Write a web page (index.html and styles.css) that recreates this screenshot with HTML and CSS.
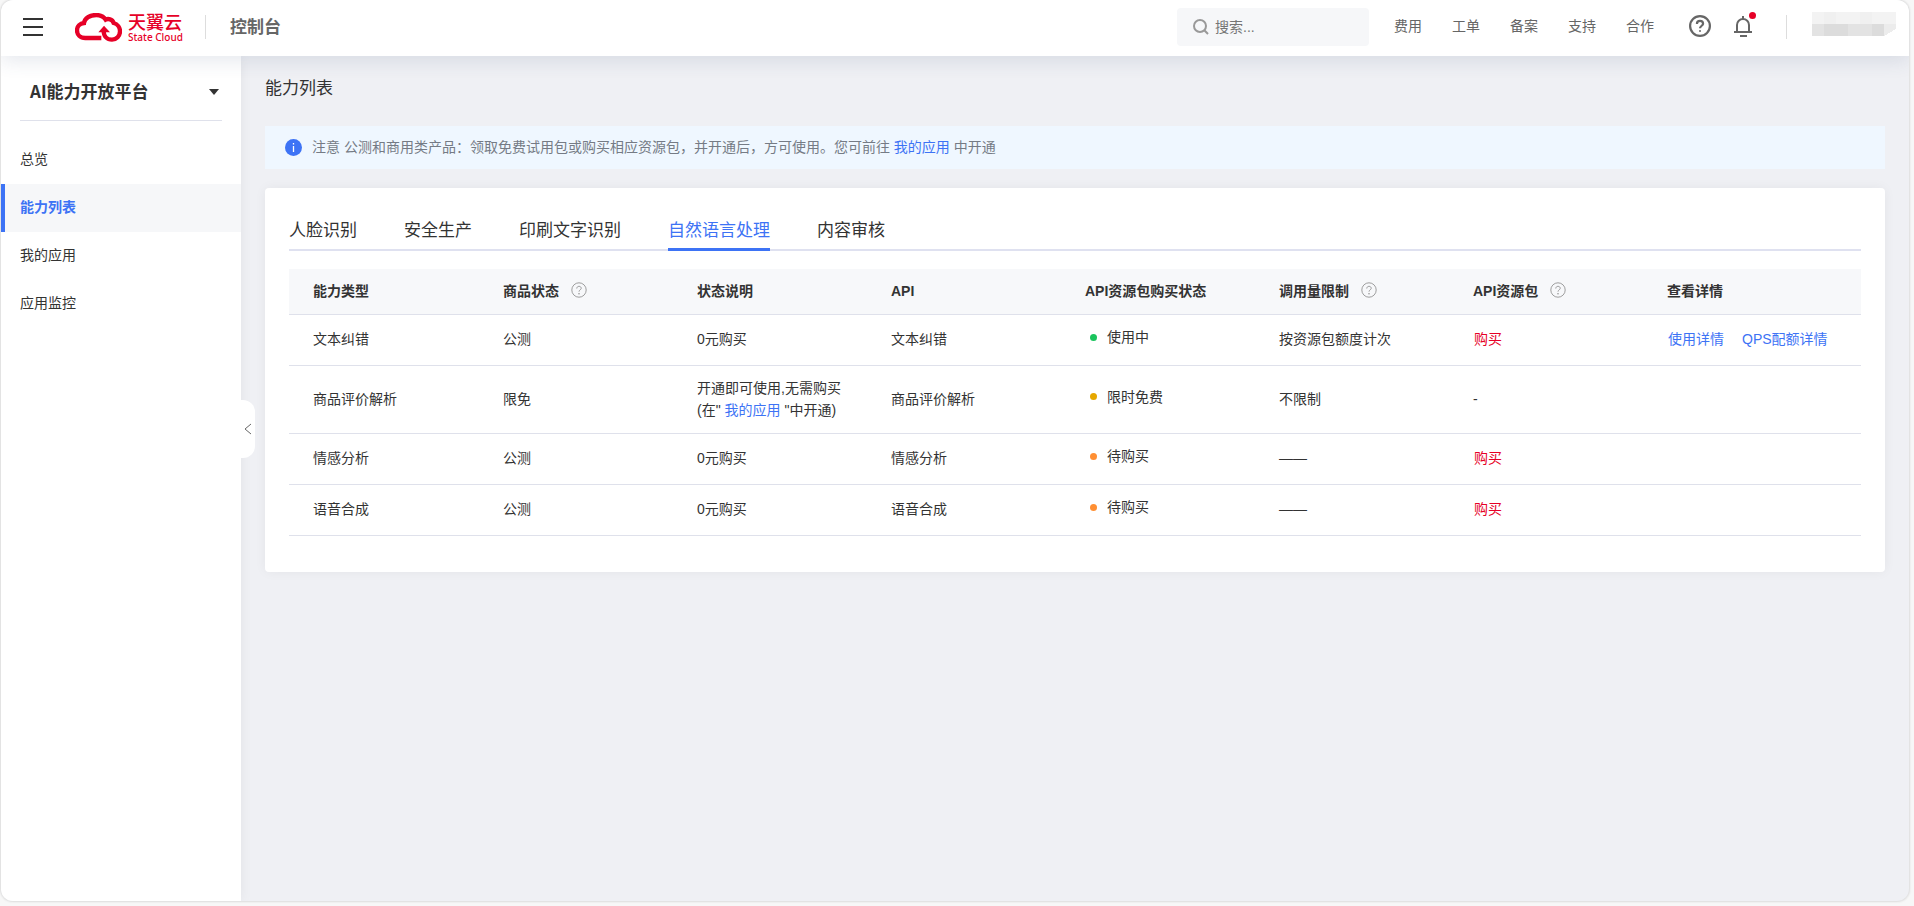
FILE: index.html
```html
<!doctype html>
<html lang="zh-CN">
<head>
	<meta charset="UTF-8">
	<meta name="viewport" content="width=device-width, initial-scale=1">
	<title>控制台 - 能力列表</title>
	<link rel="stylesheet" href="styles.css">
</head>
<body>
	<svg class="defs" width="0" height="0">
		<symbol id="help" viewBox="0 0 20 20">
			<circle cx="10" cy="10" r="9" fill="none" stroke="currentColor"/>
			<path d="M7.2 8.2c0-1.7 1.2-2.8 2.8-2.8s2.8 1 2.8 2.5c0 1.8-2.8 2-2.8 4.2" fill="none" stroke="currentColor"/>
			<circle cx="10" cy="14.6" r=".9" fill="currentColor" stroke="none"/>
		</symbol>
	</svg>
	<div class="frame">
		<header class="header">
			<button type="button" class="menu-btn" aria-label="菜单"><span></span><span></span><span></span></button>
			<a href="#" class="logo">
				<svg width="47" height="29" viewBox="225 37 141 87">
					<path d="M304 112H256C240 112 231 101 231 89C231 77 240 68 252 67C254 52 270 43 289 43C303 43 312 49 317 57C324 53 337 55 341 67C353 70 360 81 360 92C360 106 349 117 336 117C321 117 311 107 311 90" fill="none" stroke="#e60027" stroke-width="13"/>
					<path d="M295 95L312 75L330 95z" fill="#e60027"/>
				</svg>
				<span class="logo-text"><b>天翼云</b><i>State Cloud</i></span>
			</a>
			<a href="#" class="console">控制台</a>
			<label class="search">
				<svg width="16" height="16" viewBox="0 0 16 16" fill="none" stroke="#999" stroke-width="2"><circle cx="7" cy="7" r="6"/><path d="M11.3 11.3L15 15"/></svg>
				<input type="text" placeholder="搜索..." aria-label="搜索">
			</label>
			<nav class="top-nav">
				<a href="#">费用</a>
				<a href="#">工单</a>
				<a href="#">备案</a>
				<a href="#">支持</a>
				<a href="#">合作</a>
			</nav>
			<button type="button" class="icon-btn help-btn" aria-label="帮助"><svg width="22" height="22"><use href="#help"/></svg></button>
			<button type="button" class="icon-btn bell-btn" aria-label="消息">
				<svg width="18" height="22" viewBox="0 0 18 22" fill="none" stroke="#666" stroke-width="2"><path d="M3 17V10a6 6 0 0 1 12 0v7M0 17h18M6 21h7M9 1v3"/></svg>
				<span class="badge"></span>
			</button>
			<div class="user">
				<svg width="84" height="24" viewBox="0 0 84 24" shape-rendering="crispEdges">
					<path fill="#f3f3f3" d="M0 0h84v12H0z"/>
					<path fill="#f0f0f0" d="M12 0h12v12H12zM48 0h12v12H48z"/>
					<path fill="#dcdcdc" d="M12 12h24v12H12zM60 12h12v12H60z"/>
					<path fill="#e3e3e3" d="M0 12h12v12H0zM36 12h24v12H36z"/>
					<path fill="#ececec" d="M72 12h12v5l-12 7z"/>
				</svg>
			</div>
		</header>
		<div class="body">
			<aside class="side">
				<button type="button" class="side-title">AI能力开放平台<span class="caret"></span></button>
				<ul>
					<li><a href="#">总览</a></li>
					<li><a href="#" class="on">能力列表</a></li>
					<li><a href="#">我的应用</a></li>
					<li><a href="#">应用监控</a></li>
				</ul>
				<button type="button" class="fold" aria-label="收起"><svg width="8" height="12" viewBox="0 0 8 12"><path d="M7 1L1 6l6 5" fill="none" stroke="#666"/></svg></button>
			</aside>
			<main class="main">
				<h1>能力列表</h1>
				<div class="notice">
					<svg width="17" height="17" viewBox="0 0 17 17"><circle cx="8.5" cy="8.5" r="8.5" fill="#3d73f5"/><path d="M8.5 7v6M8.5 4v1.5" stroke="#fff" stroke-width="1.3"/></svg>
					<p>注意 公测和商用类产品：领取免费试用包或购买相应资源包，并开通后，方可使用。您可前往 <a href="#">我的应用</a> 中开通</p>
				</div>
				<section class="card">
					<div class="tabs">
						<button type="button">人脸识别</button>
						<button type="button">安全生产</button>
						<button type="button">印刷文字识别</button>
						<button type="button" class="on">自然语言处理</button>
						<button type="button">内容审核</button>
					</div>
					<table>
						<colgroup>
							<col class="c-first"><col class="c"><col class="c"><col class="c"><col class="c"><col class="c"><col class="c"><col>
						</colgroup>
						<thead>
							<tr>
								<th>能力类型</th>
								<th>商品状态<svg class="tip" width="16" height="16"><use href="#help"/></svg></th>
								<th>状态说明</th>
								<th>API</th>
								<th>API资源包购买状态</th>
								<th>调用量限制<svg class="tip" width="16" height="16"><use href="#help"/></svg></th>
								<th>API资源包<svg class="tip" width="16" height="16"><use href="#help"/></svg></th>
								<th>查看详情</th>
							</tr>
						</thead>
						<tbody>
							<tr>
								<td>文本纠错</td>
								<td>公测</td>
								<td>0元购买</td>
								<td>文本纠错</td>
								<td><span class="status using">使用中</span></td>
								<td>按资源包额度计次</td>
								<td><a href="#" class="buy">购买</a></td>
								<td class="links"><a href="#">使用详情</a><a href="#">QPS配额详情</a></td>
							</tr>
							<tr>
								<td>商品评价解析</td>
								<td>限免</td>
								<td>开通即可使用,无需购买<br>(在" <a href="#">我的应用</a> "中开通)</td>
								<td>商品评价解析</td>
								<td><span class="status free">限时免费</span></td>
								<td>不限制</td>
								<td>-</td>
								<td></td>
							</tr>
							<tr>
								<td>情感分析</td>
								<td>公测</td>
								<td>0元购买</td>
								<td>情感分析</td>
								<td><span class="status wait">待购买</span></td>
								<td>——</td>
								<td><a href="#" class="buy">购买</a></td>
								<td></td>
							</tr>
							<tr>
								<td>语音合成</td>
								<td>公测</td>
								<td>0元购买</td>
								<td>语音合成</td>
								<td><span class="status wait">待购买</span></td>
								<td>——</td>
								<td><a href="#" class="buy">购买</a></td>
								<td></td>
							</tr>
						</tbody>
					</table>
				</section>
			</main>
		</div>
	</div>
</body>
</html>
```
FILE: styles.css
```css
*{
	margin:0;
	padding:0;
	box-sizing:border-box;
}
body{
	min-height:100vh;
	padding:0 5px 5px 1px;
	display:flex;
	background:#f7f7f7;
	color:#333;
	font:14px/22px "Liberation Sans","Noto Sans CJK SC",sans-serif;
}
ul{
	list-style:none;
}
a{
	color:#3d73f5;
	text-decoration:none;
}
button{
	border:0;
	background:none;
	color:inherit;
	font:inherit;
	cursor:pointer;
}
.defs{
	position:absolute;
}
.frame{
	flex:1;
	min-width:0;
	display:flex;
	flex-direction:column;
	border-radius:12px;
	overflow:hidden;
	background:#eff0f4;
	box-shadow:0 0 2px 1px #dcdcdc;
}
/*顶部*/
.header{
	position:relative;
	z-index:2;
	height:56px;
	padding:0 13px 2px 22px;
	display:flex;
	align-items:center;
	background:#fff;
	box-shadow:0 4px 20px rgba(60,80,120,.14);
}
.menu-btn{
	width:20px;
	display:flex;
	flex-direction:column;
	gap:6px;
}
.menu-btn span{
	height:2px;
	background:#333;
}
.logo{
	margin-left:32px;
	display:flex;
	align-items:center;
	gap:6px;
	color:#e60027;
}
.logo-text{
	width:77px;
	display:flex;
	flex-direction:column;
}
.logo-text b{
	font:500 18px/20px "Noto Sans CJK SC",sans-serif;
}
.logo-text i{
	font:500 10px/12px "Noto Sans",sans-serif;
	white-space:nowrap;
}
.console{
	height:24px;
	padding-left:24px;
	border-left:1px solid #ddd;
	color:#666;
	font:bold 17px/22px "Noto Sans CJK SC",sans-serif;
}
.search{
	width:192px;
	height:38px;
	margin-left:auto;
	padding:0 16px;
	display:flex;
	align-items:center;
	gap:6px;
	border-radius:4px;
	background:#f6f7f9;
}
.search svg{
	flex:none;
}
.search input{
	width:100%;
	border:0;
	outline:0;
	background:none;
	font:inherit;
}
.search input::placeholder{
	color:#757575;
}
.top-nav{
	margin:0 35px 2px 25px;
	display:flex;
	gap:30px;
}
.top-nav a{
	color:#666;
}
.icon-btn{
	position:relative;
	display:flex;
	margin-bottom:2px;
	color:#666;
}
.help-btn svg{
	stroke-width:2;
}
.bell-btn{
	margin-left:23px;
	margin-right:34px;
}
.badge{
	position:absolute;
	right:-4px;
	top:-3px;
	width:7px;
	height:7px;
	border-radius:50%;
	background:#e60027;
}
.user{
	height:24px;
	padding-left:25px;
	border-left:1px solid #ddd;
}
.user svg{
	display:block;
	margin-top:-3px;
}
/*左侧菜单*/
.body{
	flex:1;
	display:flex;
}
.side{
	position:relative;
	flex:none;
	width:240px;
	background:#fff;
	box-shadow:0 0 12px rgba(0,0,0,.06);
}
.side-title{
	width:202px;
	height:65px;
	margin-left:19px;
	padding:5px 3px 0 10px;
	display:flex;
	align-items:center;
	justify-content:space-between;
	border-bottom:1px solid #dfe1eb;
	font:bold 17px/24px "Noto Sans CJK SC",sans-serif;
}
.caret{
	margin-top:2px;
	border:5px solid transparent;
	border-top:6px solid #333;
	border-bottom:0;
}
.side ul{
	margin-top:15px;
}
.side li a{
	height:48px;
	padding:0 0 2px 15px;
	display:flex;
	align-items:center;
	border-left:4px solid transparent;
	color:#333;
}
.side li .on{
	border-color:#3d73f5;
	background:#f6f7f9;
	color:#3d73f5;
	font-weight:bold;
}
.fold{
	position:absolute;
	left:100%;
	top:344px;
	width:14px;
	height:58px;
	display:flex;
	align-items:center;
	justify-content:center;
	border-radius:0 12px 12px 0;
	background:#fff;
}
/*内容*/
.main{
	flex:1;
	min-width:0;
	padding:19px 24px;
}
.main h1{
	font:400 17px/24px "Noto Sans CJK SC",sans-serif;
}
.notice{
	min-height:43px;
	margin:27px 0 19px;
	padding:0 20px;
	display:flex;
	align-items:center;
	gap:10px;
	background:#eff7ff;
	color:#757b85;
}
.notice svg{
	flex:none;
}
.notice p{
	padding-bottom:2px;
}
.card{
	padding:24px 24px 36px;
	border-radius:4px;
	background:#fff;
	box-shadow:0 0 12px rgba(0,0,0,.05);
}
.tabs{
	margin-bottom:18px;
	display:flex;
	gap:47px;
	border-bottom:2px solid #dfe1f0;
}
.tabs button{
	height:39px;
	margin-bottom:-2px;
	padding-bottom:3px;
	border-bottom:3px solid transparent;
	font:400 17px/24px "Noto Sans CJK SC",sans-serif;
}
.tabs .on{
	border-color:#3d73f5;
	color:#3d73f5;
}
table{
	width:100%;
	table-layout:fixed;
	border-collapse:separate;
	border-spacing:0;
}
.c-first{
	width:190px;
}
.c{
	width:194px;
}
th,td{
	padding:0 0 2px 24px;
	border-bottom:1px solid #dfe1eb;
	text-align:left;
	white-space:nowrap;
}
th{
	height:46px;
	background:#f7f8fa;
}
td{
	height:51px;
}
tr:nth-child(2) td{
	height:68px;
}
.tip{
	margin-left:12px;
	vertical-align:-2px;
	color:#888;
}
.status{
	padding:0 0 4px 5px;
	display:flex;
	align-items:center;
	gap:10px;
}
.status::before{
	content:"";
	width:7px;
	height:7px;
	border-radius:50%;
}
.using::before{
	background:#1ac45d;
}
.free::before{
	background:#e6a700;
}
.wait::before{
	background:#ff8f33;
}
.buy{
	margin-left:1px;
	color:#e60027;
}
.links a{
	margin:0 17px 0 1px;
}
```
